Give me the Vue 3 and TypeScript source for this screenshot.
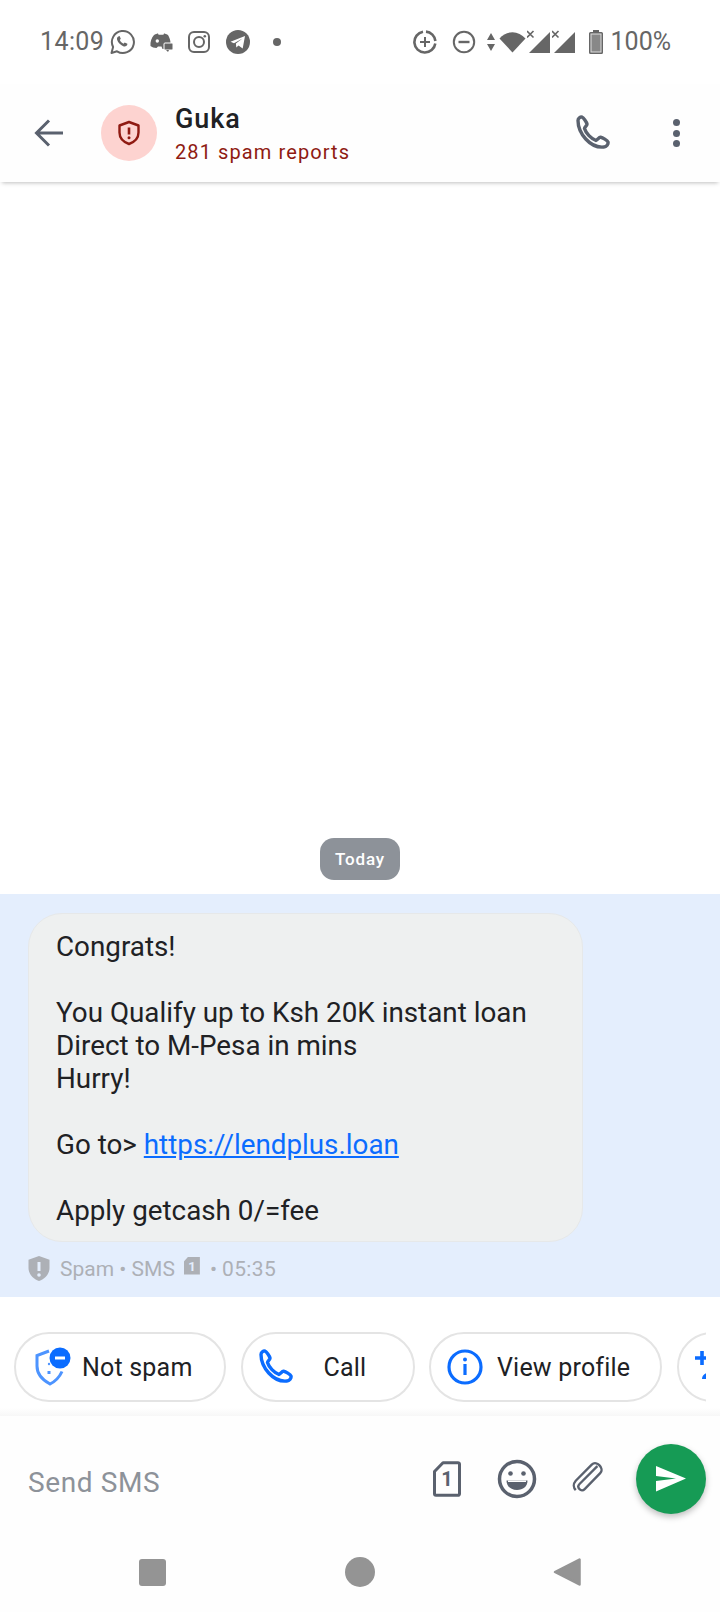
<script setup lang="ts">
const lines: string[] = ['Congrats!', '', 'You Qualify up to Ksh 20K instant loan', 'Direct to M-Pesa in mins', 'Hurry!', '']
</script>

<template>
  <div class="screen">
    <div class="status">
      <span class="time">14:09</span>
      <svg class="s-ic wa" viewBox="0 0 26 26" width="26" height="26"><path d="M2.5 24l1.6-6A11 11 0 1 1 8 22.3z" fill="none" stroke="#666" stroke-width="2" stroke-linejoin="round"/><path d="M9.3 7.5c-1 .5-1.6 1.8-1.2 3.2.9 3 3.600 5.600 6.700 6.700 1.500.4 2.800-.2 3.400-1.300l.2-1.300-2.700-1.400-1.200 1.300c-1.500-.6-3-2-3.700-3.700l1-1.200-1.200-2.800z" fill="#666"/></svg>
      <svg class="s-ic disc" viewBox="0 0 24 20" width="24" height="20"><path d="M5 3c2-1 3-1.500 4-1.500l.6 1.200h4.800L15 1.500c1 0 2 .5 4 1.500 1.500 2.500 2.500 5.500 2.500 8l-5 1v5h-3l-1-2.500H9L7.500 16C5 16 3 15 1.500 14 1 10 2.500 5.500 5 3z" fill="#666"/><circle cx="8.300" cy="9" r="1.700" fill="#fff"/><rect x="15" y="11" width="9" height="7" rx="1" fill="#666" stroke="#fff" stroke-width="1"/><path d="M17 18h3l-1 2z" fill="#666"/></svg>
      <svg class="s-ic ig" viewBox="0 0 24 24" width="24" height="24"><rect x="2" y="2" width="20" height="20" rx="5" fill="none" stroke="#666" stroke-width="2"/><circle cx="12" cy="12" r="5" fill="none" stroke="#666" stroke-width="2"/><circle cx="17.800" cy="6.200" r="1.300" fill="#666"/></svg>
      <svg class="s-ic tg" viewBox="0 0 24 24" width="24" height="24"><circle cx="12" cy="12" r="12" fill="#666"/><path d="M4.500 11.800L19 6l-2.300 12.500-4.200-3.100-2.200 2.200-.4-4L16.500 8.500 8 13.300z" fill="#fff"/></svg>
      <span class="dot"></span>
      <span class="grow"></span>
      <svg class="s-ic sync" viewBox="0 0 24 24" width="24" height="24"><path d="M13 1.600A10.500 10.500 0 0 1 22.400 11M22.300 13.500A10.500 10.500 0 1 1 10 1.700" fill="none" stroke="#666" stroke-width="2.600"/><path d="M12 7v10M7 12h10" stroke="#666" stroke-width="2"/></svg>
      <svg class="s-ic dnd" viewBox="0 0 24 24" width="24" height="24"><circle cx="12" cy="12" r="10.200" fill="none" stroke="#666" stroke-width="2"/><path d="M6.500 12h11" stroke="#666" stroke-width="2.400"/></svg>
      <svg class="s-ic arrows" viewBox="0 0 10 20" width="10" height="20"><path d="M5 1l4 7H1zM5 19l-4-7h8z" fill="#666"/></svg>
      <svg class="s-ic wifi" viewBox="0 0 27 22" width="27" height="22"><path d="M13.500 21.500L.5 7.500C4 3.500 8.500 1.200 13.500 1.200S23 3.500 26.500 7.500z" fill="#666"/></svg>
      <svg class="s-ic sig" viewBox="0 0 24 24" width="24" height="24"><path d="M23 2v21H2z" fill="#666"/><path d="M0 1l6.500 6.500M6.500 1L0 7.500" stroke="#666" stroke-width="1.600"/></svg>
      <svg class="s-ic sig2" viewBox="0 0 24 24" width="24" height="24"><path d="M23 2v21H2z" fill="#666"/><path d="M0 1l6.500 6.500M6.500 1L0 7.500" stroke="#666" stroke-width="1.600"/></svg>
      <svg class="s-ic batt" viewBox="0 0 14 24" width="14" height="24"><path d="M4 0h6v2h2.500A1.500 1.500 0 0 1 14 3.500v19a1.500 1.500 0 0 1-1.500 1.500h-11A1.500 1.500 0 0 1 0 22.500v-19A1.500 1.500 0 0 1 1.500 2H4z" fill="#666"/><rect x="2" y="4" width="10" height="18" fill="#888" stroke="#ddd" stroke-width="1"/></svg>
      <span class="pct">100%</span>
    </div>

    <header class="head">
      <svg class="back" viewBox="0 0 30 28" width="30" height="28"><path d="M29 14H3M15 1.500L2.500 14 15 26.500" fill="none" stroke="#5a616e" stroke-width="3"/></svg>
      <div class="avatar">
        <svg viewBox="0 0 24 26" width="24" height="26"><path d="M12 2l9.500 3.500v7c0 5.500-4 9.500-9.500 11.500C6.500 22 2.500 18 2.500 12.500v-7z" fill="none" stroke="#8f1a12" stroke-width="2.400" stroke-linejoin="round"/><path d="M12 7.500v7" stroke="#8f1a12" stroke-width="2.600"/><circle cx="12" cy="17.800" r="1.500" fill="#8f1a12"/></svg>
      </div>
      <div class="who">
        <div class="name">Guka</div>
        <div class="reports">281 spam reports</div>
      </div>
      <svg class="h-call" viewBox="0 0 36 36" width="36" height="36"><path d="M3 5.500c0-2 2.500-4 4-3.500 1.500.6 4.500 5 5 7 .3 1.500-2.500 3-2.500 4.500 1.500 5 6.500 10 11.500 12 1.500-.5 3-3.500 4.500-3.300 2 .5 7 3 7.500 4.800.5 2-1.500 5-4 5C15 33.500 3 18 3 5.500z" fill="none" stroke="#5a616e" stroke-width="3.400" stroke-linejoin="round"/></svg>
      <div class="more"><i></i><i></i><i></i></div>
    </header>

    <main class="msgs">
      <div class="today">Today</div>
      <section class="hl">
        <div class="bubble">
          <div v-for="(l, i) in lines" :key="i" class="ln">{{ l || '\u00a0' }}</div>
          <div class="ln">Go to&gt; <span class="link">https://lendplus.loan</span></div>
          <div class="ln">&nbsp;</div>
          <div class="ln">Apply getcash 0/=fee</div>
        </div>
        <div class="meta">
          <svg viewBox="0 0 22 26" width="22" height="26"><path d="M11 0l10.500 3.800v8.200c0 6-4.500 10.800-10.500 13C5 22.800.5 18 .5 12V3.800z" fill="#adb0b6"/><path d="M11 6v9" stroke="#e4eefd" stroke-width="3"/><circle cx="11" cy="19" r="1.800" fill="#e4eefd"/></svg>
          <span class="m-text">Spam • SMS</span>
          <span class="sim-mini">1</span>
          <span class="m-text">•</span>
          <span class="m-text m-time">05:35</span>
        </div>
      </section>
    </main>

    <div class="chips-wrap">
      <div class="chips">
        <button class="chip c1">
          <svg class="shield" viewBox="0 0 36 40" width="36" height="40"><path d="M14 4L2 8.500V19c0 8 5.500 14 13 18 5-2.500 9.500-7 12-12.500" fill="none" stroke="#4d94ff" stroke-width="3"/><circle cx="14" cy="17" r="1.200" fill="#4d94ff"/><rect x="12.500" y="24" width="3" height="3" fill="#4d94ff"/><circle cx="25" cy="11" r="10.500" fill="#0b6cff"/><path d="M20 11h10" stroke="#fff" stroke-width="3"/></svg>
          <span>Not spam</span>
        </button>
        <button class="chip c2">
          <svg viewBox="0 0 36 36" width="36" height="36"><path d="M3 5.500c0-2 2.500-4 4-3.500 1.500.6 4.500 5 5 7 .3 1.500-2.500 3-2.500 4.500 1.500 5 6.500 10 11.500 12 1.500-.5 3-3.500 4.500-3.300 2 .5 7 3 7.500 4.800.5 2-1.500 5-4 5C15 33.500 3 18 3 5.500z" fill="none" stroke="#0b6cff" stroke-width="3.400" stroke-linejoin="round"/></svg>
          <span>Call</span>
        </button>
        <button class="chip c3">
          <svg viewBox="0 0 36 36" width="36" height="36"><circle cx="18" cy="18" r="16" fill="none" stroke="#0b6cff" stroke-width="3.200"/><circle cx="18" cy="10.500" r="2" fill="#0b6cff"/><rect x="16.400" y="15" width="3.200" height="11" fill="#0b6cff"/></svg>
          <span>View profile</span>
        </button>
        <button class="chip c4">
          <svg viewBox="0 0 36 36" width="36" height="36"><path d="M9 2v14M2 9h14" stroke="#0b6cff" stroke-width="3.600"/><circle cx="19" cy="16" r="5" fill="#0b6cff"/><path d="M9 30c0-5 5-7 10-7s10 2 10 7z" fill="#0b6cff"/></svg>
        </button>
      </div>
    </div>

    <div class="composer">
      <span class="ph">Send SMS</span>
      <span class="grow"></span>
      <svg class="sim" viewBox="0 0 28 36" width="28" height="36"><path d="M10 1.700h15a1.500 1.500 0 0 1 1.500 1.500v29.600a1.500 1.500 0 0 1-1.500 1.500H3a1.500 1.500 0 0 1-1.500-1.500V10.500z" fill="none" stroke="#5a616e" stroke-width="3" stroke-linejoin="round"/><text x="14" y="25" text-anchor="middle" class="sim-n">1</text></svg>
      <svg class="emoji" viewBox="0 0 40 40" width="40" height="40"><circle cx="20" cy="20" r="17.500" fill="none" stroke="#5a616e" stroke-width="3.500"/><circle cx="13.500" cy="14.500" r="2.300" fill="#5a616e"/><circle cx="26.500" cy="14.500" r="2.300" fill="#5a616e"/><path d="M9.500 21.500h21c0 6-4.500 9.500-10.500 9.500s-10.500-3.500-10.500-9.500z" fill="#5a616e"/><path d="M11 21.500h18v1.500H11z" fill="#fff"/></svg>
      <svg class="clip" viewBox="0 0 32 36" width="32" height="36"><path d="M27 6.500L8 25.500c-2 2-1.500 4 0 5.500s3.500 2 5.500 0L30 14c3-3 .5-7-1-8.500s-5-3.500-8 -.5L4 22c-3 3.500-2.500 7.500 0 10" fill="none" stroke="#5a616e" stroke-width="2.500" transform="translate(1 -1) scale(.94)"/></svg>
      <button class="fab">
        <svg viewBox="0 0 32 28" width="32" height="28"><path d="M1 1l30 12.500L1 26.500V16l20-2.500L1 11z" fill="#fff"/></svg>
      </button>
    </div>

    <nav class="nav">
      <span class="sq"></span>
      <span class="ci"></span>
      <svg viewBox="0 0 28 30" width="28" height="30"><path d="M26.500 2.500v25L2 15z" fill="#949494" stroke="#949494" stroke-width="2.500" stroke-linejoin="round"/></svg>
    </nav>
  </div>
</template>

<style>
html, body { margin: 0; background: #fff; }
</style>

<style scoped>
.screen {
  width: 720px;
  height: 1612px;
  display: flex;
  flex-direction: column;
  overflow: hidden;
  background: #fff;
  font-family: Roboto, sans-serif;
  color: #202124;
}
.status {
  height: 84px;
  flex: none;
  display: flex;
  align-items: center;
  padding: 0 49px 0 40px;
  color: #666;
  box-sizing: border-box;
}
.time, .pct { font-size: 25px; line-height: 28px; }
.time { letter-spacing: .4px; }
.s-ic { flex: none; }
.wa { margin-left: 5px; }
.disc { margin-left: 14px; }
.ig { margin-left: 14px; }
.tg { margin-left: 15px; }
.dot { width: 8px; height: 8px; border-radius: 50%; background: #666; margin-left: 23px; }
.grow { flex: 1; }
.sync { margin-right: 15px; }
.dnd { margin-right: 10px; }
.arrows { margin-right: 3px; }
.sig { margin-left: 1px; }
.sig2 { margin-left: 1px; }
.batt { margin-left: 13px; }
.pct { margin-left: 8px; }

.head {
  height: 98px;
  flex: none;
  display: flex;
  align-items: center;
  padding-left: 34px;
  box-sizing: border-box;
  background: #fefefe;
  box-shadow: 0 3px 4px -2px rgba(0, 0, 0, .25);
  position: relative;
  z-index: 2;
}
.back { flex: none; }
.avatar {
  width: 56px;
  height: 56px;
  margin-left: 37px;
  border-radius: 50%;
  background: #fdd3d0;
  display: flex;
  align-items: center;
  justify-content: center;
  flex: none;
}
.who { margin: 2px 0 0 18px; width: 400px; flex: none; }
.name { font-size: 27px; line-height: 34px; font-weight: 500; letter-spacing: .9px; color: #202124; }
.reports { font-size: 20px; line-height: 28px; margin-top: 2px; letter-spacing: 1.1px; color: #8f1a12; }
.h-call { flex: none; }
.more { margin-left: 62px; display: flex; flex-direction: column; gap: 3.500px; }
.more i { display: block; width: 7px; height: 7px; border-radius: 50%; background: #5a616e; }

.msgs {
  flex: 1;
  display: flex;
  flex-direction: column;
  justify-content: flex-end;
  align-items: center;
}
.today {
  width: 80px;
  height: 42px;
  border-radius: 14px;
  background: #8d9299;
  color: #fff;
  font-size: 17px;
  font-weight: 500;
  letter-spacing: .8px;
  display: flex;
  align-items: center;
  justify-content: center;
  margin-bottom: 14px;
}
.hl {
  align-self: stretch;
  height: 403px;
  box-sizing: border-box;
  background: #e4eefd;
  padding: 19px 0 0 28px;
}
.bubble {
  width: 555px;
  height: 329px;
  box-sizing: border-box;
  background: #eef0f0;
  border: 1.500px solid #e6e8e9;
  border-radius: 34px;
  padding: 16px 0 0 27px;
  font-size: 27.800px;
  line-height: 33px;
  color: #202124;
}
.ln { height: 33px; white-space: nowrap; }
.link { color: #0b6cff; text-decoration: underline; }
.meta {
  display: flex;
  align-items: center;
  margin-top: 13px;
  height: 28px;
  color: #adb0b6;
  font-size: 21px;
}
.m-time { margin-left: 5px; letter-spacing: .4px; }
.meta svg { margin-right: 10px; }
.sim-mini {
  width: 16px;
  height: 18px;
  margin: -7px 10px 0 9px;
  background: #adb0b6;
  color: #e4eefd;
  font-size: 13px;
  font-weight: 700;
  line-height: 19px;
  text-align: center;
  clip-path: polygon(28% 0, 100% 0, 100% 100%, 0 100%, 0 28%);
}

.chips-wrap {
  height: 119px;
  flex: none;
  background: linear-gradient(#fff, #f7f7f7) no-repeat bottom / 100% 8px;
}
.chips {
  height: 111px;
  box-sizing: border-box;
  width: 706px;
  padding: 35px 0 0 14px;
  display: flex;
  gap: 14.500px;
  overflow: hidden;
}
.chip {
  flex: none;
  height: 70px;
  box-sizing: border-box;
  border: 2px solid #e4e4e4;
  border-radius: 35px;
  background: #fff;
  display: flex;
  align-items: center;
  font-family: inherit;
  font-size: 25px;
  letter-spacing: .2px;
  color: #202124;
  padding: 0;
}
.c1 { width: 212px; padding-left: 19px; }
.c1 span { margin-left: 11px; }
.c2 { width: 174px; padding-left: 15px; }
.c2 span { margin-left: 30px; }
.c3 { width: 233px; padding-left: 16px; }
.c3 span { margin-left: 14px; }
.c4 { width: 70px; padding-left: 14px; }

.composer {
  height: 116px;
  flex: none;
  box-sizing: border-box;
  display: flex;
  align-items: center;
  padding: 10px 14px 0 28px;
  background: #fefefe;
}
.ph { font-size: 28px; letter-spacing: .6px; color: #8d9299; margin-top: 6px; }
.sim { margin-right: 36px; flex: none; }
.sim-n { font-family: Roboto, sans-serif; font-size: 20px; font-weight: 700; fill: #5a616e; }
.emoji { margin-right: 34px; flex: none; }
.clip { margin-right: 33px; flex: none; }
.fab {
  width: 70px;
  height: 70px;
  flex: none;
  border-radius: 50%;
  border: 0;
  padding: 0;
  background: #169b55;
  box-shadow: 0 3px 6px rgba(0, 0, 0, .25);
  display: flex;
  align-items: center;
  justify-content: center;
}

.nav {
  height: 80px;
  flex: none;
  display: flex;
  align-items: center;
  padding: 0 0 0 139px;
  box-sizing: border-box;
  background: #fefefe;
}
.sq { width: 27px; height: 27px; border-radius: 3px; background: #949494; }
.ci { width: 30px; height: 30px; border-radius: 50%; background: #949494; margin-left: 179px; }
.nav svg { margin-left: 178px; }
</style>
